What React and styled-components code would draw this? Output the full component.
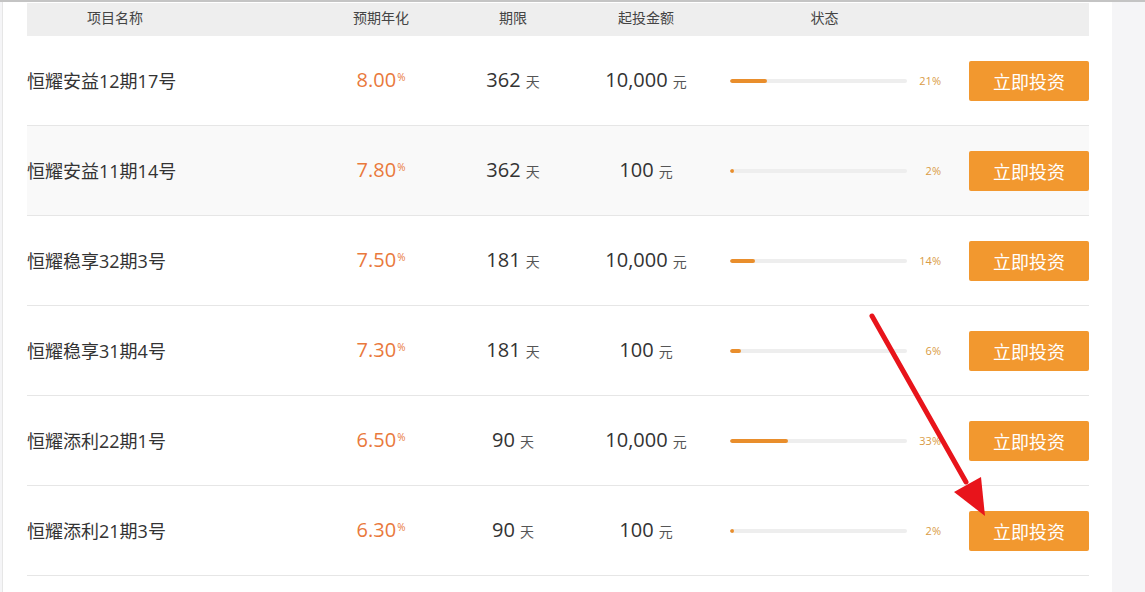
import styled, { createGlobalStyle } from 'styled-components'

const products = [
	{ name: '恒耀安益12期17号', rate: '8.00', days: 362, min: '10,000', progress: 21 },
	{ name: '恒耀安益11期14号', rate: '7.80', days: 362, min: '100', progress: 2 },
	{ name: '恒耀稳享32期3号', rate: '7.50', days: 181, min: '10,000', progress: 14 },
	{ name: '恒耀稳享31期4号', rate: '7.30', days: 181, min: '100', progress: 6 },
	{ name: '恒耀添利22期1号', rate: '6.50', days: 90, min: '10,000', progress: 33 },
	{ name: '恒耀添利21期3号', rate: '6.30', days: 90, min: '100', progress: 2 }
]

const Arrow = () => (
	<ArrowLayer width="1145" height="592" viewBox="0 0 1145 592">
		<line x1="872" y1="316" x2="966" y2="482" stroke="#e8141b" strokeWidth="5" strokeLinecap="round" />
		<polygon points="985,516 954,492 981,477" fill="#e8141b" />
	</ArrowLayer>
)

const App = () => {
	return (
		<Page>
			<GlobalStyle />
			<Panel>
				<Table>
					<HeaderRow>
						<HeadCell align="left" pad={60}>项目名称</HeadCell>
						<HeadCell>预期年化</HeadCell>
						<HeadCell>期限</HeadCell>
						<HeadCell>起投金额</HeadCell>
						<HeadCell pad={0} right={28}>状态</HeadCell>
						<HeadCell />
					</HeaderRow>
					{products.map((p, i) => (
						<Row key={p.name} striped={i === 1}>
							<Name>{p.name}</Name>
							<Rate>
								{p.rate}
								<sup>%</sup>
							</Rate>
							<Amount>
								{p.days}
								<Unit>天</Unit>
							</Amount>
							<Amount>
								{p.min}
								<Unit>元</Unit>
							</Amount>
							<Status>
								<Track>
									<Fill style={{ width: `${p.progress}%` }} />
								</Track>
								<Percent>{p.progress}%</Percent>
							</Status>
							<InvestButton>立即投资</InvestButton>
						</Row>
					))}
				</Table>
			</Panel>
			<Arrow />
		</Page>
	)
}

export default App

const GlobalStyle = createGlobalStyle`
	html, body {
		margin: 0;
		padding: 0;
		background: #f5f5f7;
		font-family: "Open Sans", "Noto Sans CJK SC", sans-serif;
	}
`

const Page = styled.div`
	position: relative;
	width: 1145px;
	height: 592px;
	overflow: hidden;
	border-top: 2px solid #c4c4c4;
	box-sizing: border-box;
`

const Panel = styled.div`
	width: 1110px;
	height: 100%;
	margin-left: 2px;
	border-left: 1px solid #e6e6e6;
	background: #fff;
	padding: 1px 24px 0 24px;
	box-sizing: border-box;
`

const Table = styled.div`
	width: 1062px;
	display: flex;
	flex-direction: column;
`

const columns = '293px 122px 142px 124px 261px 120px'

const HeaderRow = styled.div`
	display: grid;
	grid-template-columns: ${columns};
	height: 33px;
	background: #eeeeee;
	align-items: center;
`

const HeadCell = styled.div`
	text-align: ${(props) => props.align || 'center'};
	padding-left: ${(props) => props.pad || 0}px;
	padding-right: ${(props) => props.right || 0}px;
	font-size: 14px;
	color: #444;
	line-height: 32px;
	margin-top: -4px;
`

const Row = styled.div`
	display: grid;
	grid-template-columns: ${columns};
	align-items: center;
	height: 90px;
	box-sizing: border-box;
	border-bottom: 1px solid #e6e6e6;
	background: ${(props) => (props.striped ? '#f9f9f9' : '#fff')};
`

const Name = styled.div`
	font-size: 18px;
	color: #333;
	margin-top: -2px;
`

const Rate = styled.div`
	text-align: center;
	font-size: 20px;
	color: #e9793c;
	margin-top: -2px;

	sup {
		font-size: 10px;
		vertical-align: top;
		position: relative;
		top: 4px;
		margin-left: 1px;
	}
`

const Amount = styled.div`
	text-align: center;
	font-size: 20px;
	color: #333;
	margin-top: -2px;
`

const Unit = styled.span`
	font-size: 14px;
	color: #555;
	margin-left: 5px;
`

const Status = styled.div`
	display: flex;
	align-items: center;
	padding-left: 22px;
	padding-right: 28px;
`

const Track = styled.div`
	width: 177px;
	height: 4px;
	border-radius: 2px;
	background: #eeeeee;
	overflow: hidden;
`

const Fill = styled.div`
	height: 100%;
	min-width: 3px;
	background: #e98e2c;
	border-radius: 2px;
`

const Percent = styled.span`
	flex: 1;
	text-align: right;
	font-size: 11px;
	color: #d99b45;
`

const InvestButton = styled.button`
	width: 120px;
	height: 40px;
	border: none;
	border-radius: 2px;
	background: #f2982f;
	color: #fff;
	font-family: "Noto Sans CJK SC", sans-serif;
	font-size: 18px;
	padding: 0;
	cursor: pointer;
`

const ArrowLayer = styled.svg`
	position: absolute;
	left: 0;
	top: -2px;
	pointer-events: none;
`
